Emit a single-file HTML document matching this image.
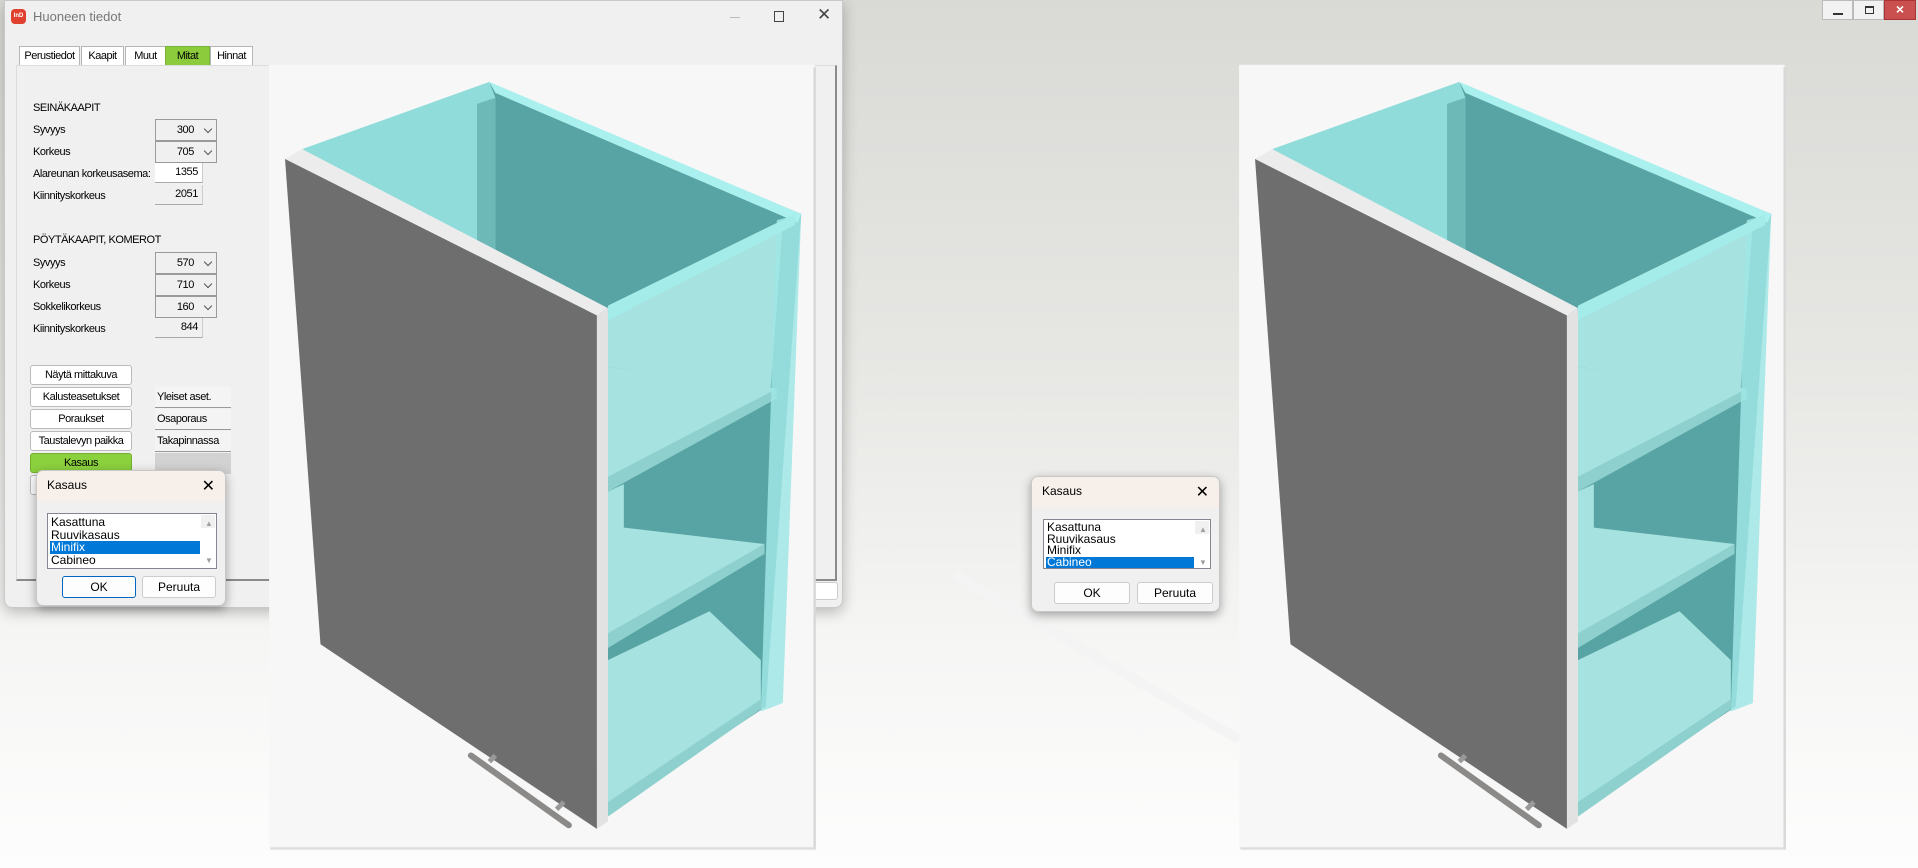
<!DOCTYPE html>
<html><head><meta charset="utf-8"><style>
*{box-sizing:border-box;margin:0;padding:0}
body{width:1918px;height:868px;overflow:hidden;position:relative;font-family:"Liberation Sans",sans-serif;font-size:11px;color:#000;
background:linear-gradient(180deg,#d9dad6 0%,#e6e6e3 40%,#f6f6f5 75%,#fdfdfd 100%)}
.abs{position:absolute}
.win{left:4px;top:0;width:839px;height:608px;background:#f0f0f0;border:1px solid #c9c9c9;border-radius:0 0 8px 8px;box-shadow:0 4px 14px rgba(0,0,0,.25)}
.tab{position:absolute;top:45px;height:19px;border:1px solid #b5b5b5;border-bottom:none;background:#fff;font-size:11px;line-height:18px;text-align:center;letter-spacing:-.5px}
.lbl{position:absolute;left:28px;font-size:11px;letter-spacing:-.45px}
.inp{position:absolute;left:154px;width:62px;height:22px;border:1px solid #9a9a9a;background:#f0f0f0;font-size:11px;text-align:right;padding-right:22px;line-height:20px;letter-spacing:-.4px}
.inp:after{content:"";position:absolute;right:5px;top:6px;width:5px;height:5px;border-right:1px solid #555;border-bottom:1px solid #555;transform:rotate(45deg)}
.txt{position:absolute;left:154px;width:48px;height:20px;background:#fff;border-bottom:1px solid #aaa;border-right:1px solid #ccc;text-align:right;padding-right:4px;line-height:19px;letter-spacing:-.4px}
.txt.g{background:#f0f0f0}
.btn{position:absolute;left:30px;width:102px;height:20px;background:#fff;border:1px solid #bbb;border-radius:3px;text-align:center;line-height:18px;letter-spacing:-.45px}
.btn2{position:absolute;left:154px;width:76px;height:21px;background:#f4f4f4;border-bottom:1px solid #999;line-height:20px;padding-left:2px;letter-spacing:-.45px}
.dlg{background:#f0f0f0;border:1px solid #c8c8c8;border-radius:7px;box-shadow:0 3px 10px rgba(0,0,0,.35);overflow:hidden}
.dlg .tb{height:30px;background:#f7efea;padding-left:10px;line-height:29px;font-size:12px}
.dlg .x{position:absolute;right:10px;top:5px;font-size:16px}
.lb{position:absolute;background:#fff;border:1px solid #828790;font-size:12px;line-height:12.5px;padding:2px 2px}
.lb div{height:12.5px;padding-left:1px}
.lb .s{background:#0078d7;color:#fff;margin-right:14px}
.sb{position:absolute;right:1px;top:1px;bottom:1px;width:14px;background:#f0f0f0;color:#a0a0a0;font-size:8px;text-align:center}
.db{position:absolute;height:22px;background:#fdfdfd;border:1px solid #ccc;border-radius:3px;text-align:center;line-height:20px;font-size:12px}
</style></head><body>

<svg class="abs" style="left:0;top:0" width="1918" height="868" viewBox="0 0 1568 710" preserveAspectRatio="none">
<line x1="780" y1="470" x2="1013" y2="605" stroke="#f4f4f4" stroke-width="8"/>
</svg>

<div class="abs" style="left:1822px;top:0;width:31px;height:20px;background:#f2f2f2;border:1px solid #bbb;"><div class="abs" style="left:10px;top:12px;width:10px;height:2px;background:#333"></div></div>
<div class="abs" style="left:1853px;top:0;width:31px;height:20px;background:#f2f2f2;border:1px solid #bbb;"><div class="abs" style="left:11px;top:5px;width:9px;height:8px;border:1px solid #333;border-top-width:2px"></div></div>
<div class="abs" style="left:1884px;top:0;width:32px;height:20px;background:#c9504e;border:1px solid #a33;color:#fff;text-align:center;font-size:14px;line-height:17px;font-weight:bold">×</div>

<div class="abs win">
  <div class="abs" style="left:6px;top:8px;width:15px;height:15px;background:#e0412f;border-radius:4px;color:#fff;font-size:6px;line-height:15px;text-align:center;font-weight:bold">InD</div>
  <div class="abs" style="left:28px;top:8px;color:#777;font-size:13px">Huoneen tiedot</div>
  <div class="abs" style="left:725px;top:16px;width:10px;height:1px;background:#bbb"></div>
  <div class="abs" style="left:769px;top:10px;width:10px;height:11px;border:1px solid #444"></div>
  <div class="abs" style="left:812px;top:4px;font-size:17px;color:#444">✕</div>
  <div class="tab" style="left:14px;width:61px">Perustiedot</div>
  <div class="tab" style="left:76px;width:43px">Kaapit</div>
  <div class="tab" style="left:120px;width:40px;border-right:none">Muut</div>
  <div class="tab" style="left:160px;width:45px;background:#8ccc3c;border-color:#7ab33a">Mitat</div>
  <div class="tab" style="left:205px;width:43px">Hinnat</div>
  <div class="abs" style="left:11px;top:64px;width:821px;height:516px;border:1px solid #dcdcdc;border-bottom:2px solid #8a8a8a;border-right:2px solid #8a8a8a;background:#f0f0f0"></div>
  <div class="lbl" style="top:101px">SEINÄKAAPIT</div>
  <div class="lbl" style="top:123px">Syvyys</div><div class="inp" style="left:150px;top:118px">300</div>
  <div class="lbl" style="top:145px">Korkeus</div><div class="inp" style="left:150px;top:140px">705</div>
  <div class="lbl" style="top:167px">Alareunan korkeusasema:</div><div class="txt" style="left:150px;top:162px">1355</div>
  <div class="lbl" style="top:189px">Kiinnityskorkeus</div><div class="txt g" style="left:150px;top:184px">2051</div>
  <div class="lbl" style="top:233px">PÖYTÄKAAPIT, KOMEROT</div>
  <div class="lbl" style="top:256px">Syvyys</div><div class="inp" style="left:150px;top:251px">570</div>
  <div class="lbl" style="top:278px">Korkeus</div><div class="inp" style="left:150px;top:273px">710</div>
  <div class="lbl" style="top:300px">Sokkelikorkeus</div><div class="inp" style="left:150px;top:295px">160</div>
  <div class="lbl" style="top:322px">Kiinnityskorkeus</div><div class="txt g" style="left:150px;top:317px">844</div>
  <div class="btn" style="left:25px;top:364px">Näytä mittakuva</div>
  <div class="btn" style="left:25px;top:386px">Kalusteasetukset</div><div class="btn2" style="left:150px;top:386px">Yleiset aset.</div>
  <div class="btn" style="left:25px;top:408px">Poraukset</div><div class="btn2" style="left:150px;top:408px">Osaporaus</div>
  <div class="btn" style="left:25px;top:430px">Taustalevyn paikka</div><div class="btn2" style="left:150px;top:430px">Takapinnassa</div>
  <div class="btn" style="left:25px;top:452px;background:#8bd13e;border-color:#74b030">Kasaus</div><div class="btn2" style="left:150px;top:452px;background:#d2d2d2;border:none"></div>
  <div class="btn" style="left:25px;top:474px;width:20px"></div>
  <div class="abs" style="left:803px;top:581px;width:30px;height:18px;background:#fff;border:1px solid #ccc;border-radius:3px"></div>
</div>

<svg class="abs" style="left:0;top:0" width="1918" height="868" viewBox="0 0 1568 710" preserveAspectRatio="none">
<defs>
<g id="cab">
<rect x="220" y="53" width="446" height="641" fill="#f7f7f7"/>
<rect x="665" y="55" width="2" height="640" fill="#d8d8d8"/>
<rect x="221" y="693" width="446" height="2" fill="#ddd"/>
<polygon points="400,68 655,175 626,578 497,664 497,258 405,235" fill="#58a3a3"/>
<polygon points="497,258 640,182 630,318 497,300" fill="#a6e2e0"/>
<polygon points="497,300 635,318 497,395" fill="#a6e2e0"/>
<polygon points="497,390 635,318 635,326 497,402" fill="#8ed0ce"/>
<polygon points="497,402 510,396 510,440 497,440" fill="#a6e2e0"/>
<polygon points="497,430 625,445 497,520" fill="#a6e2e0"/>
<polygon points="497,518 625,445 625,453 497,530" fill="#8ed0ce"/>
<polygon points="497,540 580,500 622,540 622,578 497,664" fill="#a6e2e0"/>
<polygon points="497,656 622,572 622,580 497,668" fill="#8ed0ce"/>
<polygon points="635,180 655,175 640,575 622,582" fill="#9fe6e5" opacity=".85"/>
<polygon points="247,122 400,67 405,80 405,235 497,255" fill="#8fdcda"/>
<polygon points="400,67 655,175 652,182 405,76" fill="#a9f0ee"/>
<polygon points="497,250 650,175 650,184 497,262" fill="#a4ecea"/>
<polygon points="390,85 405,80 405,236 390,228" fill="#6cb9b8"/>
<polygon points="233,130 488,258 488,678 262,527" fill="#6e6e6e"/>
<polygon points="233,130 247,122 497,252 488,258" fill="#ececec"/>
<polygon points="488,258 497,252 497,672 488,678" fill="#e2e2e2"/>
<line x1="385" y1="618" x2="465" y2="675" stroke="#8c8a88" stroke-width="5" stroke-linecap="round"/>
<line x1="400" y1="623" x2="405" y2="618" stroke="#999" stroke-width="4"/>
<line x1="455" y1="662" x2="461" y2="656" stroke="#999" stroke-width="4"/>
</g>
</defs>
<use href="#cab"/>
<use href="#cab" transform="translate(793,0)"/>
</svg>

<div class="abs dlg" style="left:36px;top:470px;width:190px;height:136px">
  <div class="tb">Kasaus</div><div class="x">✕</div>
  <div class="lb" style="left:10px;top:42px;width:170px;height:56px">
    <div>Kasattuna</div><div>Ruuvikasaus</div><div class="s">Minifix</div><div>Cabineo</div>
    <div class="sb"><div style="margin-top:3px">▲</div><div style="margin-top:24px">▼</div></div>
  </div>
  <div class="db" style="left:25px;top:105px;width:74px;border:1px solid #0067c0">OK</div>
  <div class="db" style="left:105px;top:105px;width:74px">Peruuta</div>
</div>

<div class="abs dlg" style="left:1031px;top:476px;width:189px;height:136px">
  <div class="tb">Kasaus</div><div class="x">✕</div>
  <div class="lb" style="left:11px;top:42px;width:168px;height:50px;line-height:11.5px">
    <div style="height:11.5px">Kasattuna</div><div style="height:11.5px">Ruuvikasaus</div><div style="height:11.5px">Minifix</div><div class="s" style="height:11.5px">Cabineo</div>
    <div class="sb"><div style="margin-top:3px">▲</div><div style="margin-top:20px">▼</div></div>
  </div>
  <div class="db" style="left:22px;top:105px;width:76px">OK</div>
  <div class="db" style="left:105px;top:105px;width:76px">Peruuta</div>
</div>
</body></html>
